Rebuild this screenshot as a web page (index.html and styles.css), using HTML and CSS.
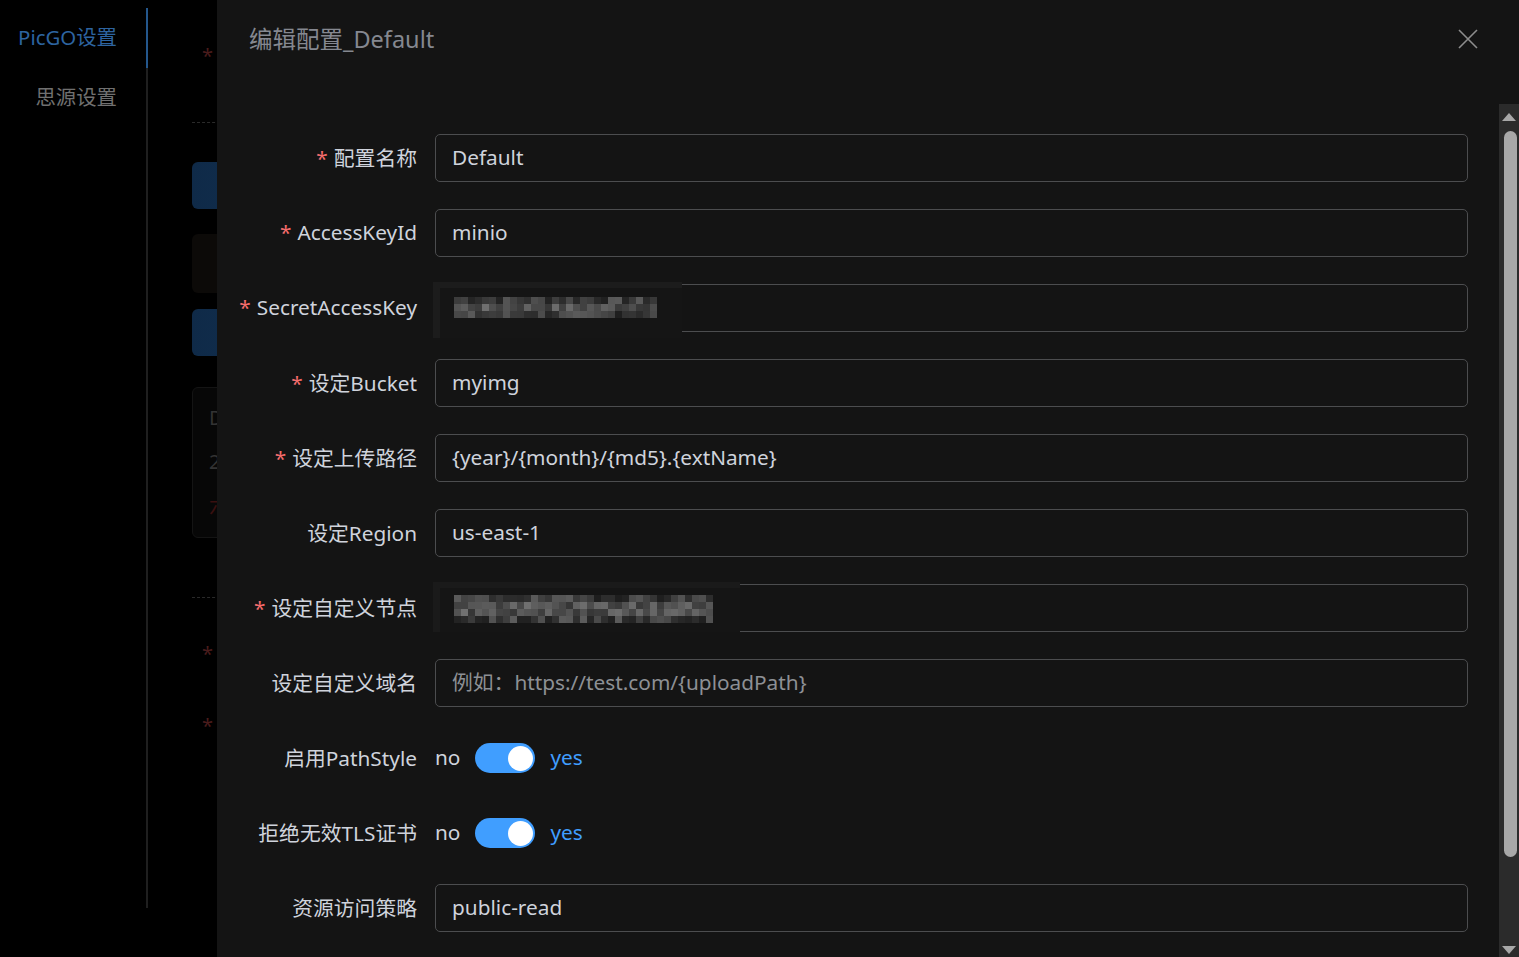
FILE: index.html
```html
<!DOCTYPE html>
<html lang="zh-CN">
<head>
    <meta charset="UTF-8">
    <meta name="viewport" content="width=device-width, initial-scale=1.0">
    <title>编辑配置_Default</title>
    <link rel="stylesheet" href="styles.css">
</head>
<body>

<div class="page">
    <aside class="side">
        <nav class="menu">
            <a class="menu-item active">PicGO设置</a>
            <a class="menu-item">思源设置</a>
        </nav>
    </aside>
    <main class="behind">
        <span class="b-star">*</span>
        <div class="b-dash"></div>
        <div class="b-btn"></div>
        <div class="b-box"></div>
        <div class="b-btn b-btn2"></div>
        <div class="b-card">
            <p>D</p>
            <p>2</p>
            <p class="b-red">六</p>
        </div>
        <div class="b-dash b-dash2"></div>
        <span class="b-star b-star2">*</span>
        <span class="b-star b-star3">*</span>
    </main>
</div>

<div class="drawer">
    <header class="drawer-head">
        <span class="drawer-title">编辑配置_Default</span>
        <button class="close" type="button" aria-label="关闭">
            <svg width="20" height="20" viewBox="0 0 20 20">
                <path d="M1 1 L19 19 M19 1 L1 19" stroke="#8d8d8d" stroke-width="1.6" fill="none"/>
            </svg>
        </button>
    </header>
    <div class="drawer-body">
        <form class="form">
            <div class="row">
                <label class="label req">配置名称</label>
                <div class="field"><input class="input" type="text" value="Default"></div>
            </div>
            <div class="row">
                <label class="label req">AccessKeyId</label>
                <div class="field"><input class="input" type="text" value="minio"></div>
            </div>
            <div class="row">
                <label class="label req">SecretAccessKey</label>
                <div class="field">
                    <input class="input" type="text" value="">
                    <div class="masked masked-key"><div class="mosaic" data-cols="29" data-rows="3" data-seed="7"></div></div>
                </div>
            </div>
            <div class="row">
                <label class="label req">设定Bucket</label>
                <div class="field"><input class="input" type="text" value="myimg"></div>
            </div>
            <div class="row">
                <label class="label req">设定上传路径</label>
                <div class="field"><input class="input" type="text" value="{year}/{month}/{md5}.{extName}"></div>
            </div>
            <div class="row">
                <label class="label">设定Region</label>
                <div class="field"><input class="input" type="text" value="us-east-1"></div>
            </div>
            <div class="row">
                <label class="label req">设定自定义节点</label>
                <div class="field">
                    <input class="input" type="text" value="">
                    <div class="masked masked-node"><div class="mosaic" data-cols="37" data-rows="4" data-seed="19"></div></div>
                </div>
            </div>
            <div class="row">
                <label class="label">设定自定义域名</label>
                <div class="field"><input class="input" type="text" placeholder="例如：https://test.com/{uploadPath}"></div>
            </div>
            <div class="row">
                <label class="label">启用PathStyle</label>
                <div class="field toggle">
                    <span class="toggle-off">no</span>
                    <span class="switch"><span class="knob"></span></span>
                    <span class="toggle-on">yes</span>
                </div>
            </div>
            <div class="row">
                <label class="label">拒绝无效TLS证书</label>
                <div class="field toggle">
                    <span class="toggle-off">no</span>
                    <span class="switch"><span class="knob"></span></span>
                    <span class="toggle-on">yes</span>
                </div>
            </div>
            <div class="row">
                <label class="label">资源访问策略</label>
                <div class="field"><input class="input" type="text" value="public-read"></div>
            </div>
        </form>
        <div class="scrollbar">
            <span class="arrow-up"></span>
            <span class="thumb"></span>
            <span class="arrow-down"></span>
        </div>
    </div>
</div>

<script>
    // fill the blurred blocks with grey squares
    document.querySelectorAll('.mosaic').forEach((box) => {
        const cols = Number(box.dataset.cols);
        const rows = Number(box.dataset.rows);
        let seed = Number(box.dataset.seed);
        box.style.gridTemplateColumns = `repeat(${cols}, 7px)`;
        for (let i = 0; i < cols * rows; i++) {
            seed = (seed * 9301 + 49297) % 233280;
            const r = seed / 233280;
            const row = Math.floor(i / cols);
            let g = 50 + Math.round(r * 62);
            if (row === 0 || row === rows - 1) g -= 20;
            const cell = document.createElement('span');
            cell.style.background = `rgb(${g}, ${g}, ${g})`;
            box.appendChild(cell);
        }
    });
</script>

</body>
</html>
```

FILE: styles.css
```css
* {
    box-sizing: border-box;
}
html, body {
    margin: 0;
    height: 100%;
    overflow: hidden;
}
body {
    background: #000;
    font-family: "Noto Sans", "Noto Sans CJK SC", sans-serif;
    color: #cfd3dc;
}
.page {
    display: flex;
    height: 100%;
}
.side {
    width: 148px;
    flex-shrink: 0;
    padding-top: 8px;
}
.menu {
    height: 900px;
    border-right: 2px solid #1f1f1f;
}
.menu-item {
    display: block;
    height: 60px;
    line-height: 58px;
    padding-right: 29px;
    margin-right: -2px;
    text-align: right;
    font-size: 20.4px;
    color: #707070;
    border-right: 2px solid transparent;
}
.menu-item.active {
    color: #2d64a0;
    border-right-color: #24578c;
}
.behind {
    flex: 1;
    padding-left: 44px;
    padding-top: 44px;
}
.b-star {
    display: block;
    margin-left: 10px;
    height: 24px;
    font-size: 20px;
    line-height: 24px;
    color: #4a1c1c;
}
.b-star2 {
    margin-top: 44px;
}
.b-star3 {
    margin-top: 48px;
}
.b-dash {
    margin-top: 54px;
    width: 400px;
    border-top: 1px dashed #2a2a2a;
}
.b-dash2 {
    margin-top: 59px;
}
.b-btn {
    margin-top: 39px;
    width: 300px;
    height: 47px;
    border-radius: 6px;
    background: linear-gradient(90deg, #0f2a48, #163a60);
}
.b-btn2 {
    margin-top: 16px;
}
.b-box {
    margin-top: 25px;
    width: 300px;
    height: 59px;
    border-radius: 6px;
    background: #0c0a08;
}
.b-card {
    margin-top: 31px;
    width: 400px;
    height: 151px;
    padding: 16px 16px;
    border: 1px solid #141414;
    border-radius: 6px;
    background: #070707;
    font-size: 20px;
    color: #333;
}
.b-card p {
    margin: 0 0 16px;
    line-height: 28px;
}
.b-card .b-red {
    color: #3a1010;
}

.drawer {
    position: fixed;
    top: 0;
    left: 217px;
    right: 0;
    bottom: 0;
    background: #141414;
    display: flex;
    flex-direction: column;
}
.drawer-head {
    height: 78px;
    padding: 0 32px;
    display: flex;
    align-items: center;
    justify-content: space-between;
    flex-shrink: 0;
}
.drawer-title {
    font-size: 23.5px;
    color: #858890;
    padding-bottom: 2px;
}
.close {
    background: none;
    border: none;
    padding: 0;
    margin-right: 9px;
    width: 20px;
    height: 20px;
    display: flex;
}
.drawer-body {
    flex: 1;
    margin-top: 26px;
    display: flex;
    overflow: hidden;
}
.form {
    flex: 1;
    padding: 30px 31px 0 19px;
}
.scrollbar {
    width: 20px;
    flex-shrink: 0;
    background: #2b2b2b;
    display: flex;
    flex-direction: column;
    align-items: center;
    padding-top: 9px;
}
.arrow-up,
.arrow-down {
    width: 0;
    height: 0;
    border-left: 7px solid transparent;
    border-right: 7px solid transparent;
}
.arrow-up {
    border-bottom: 8px solid #a8a8a8;
}
.arrow-down {
    margin-top: 89px;
    border-top: 8px solid #a8a8a8;
}
.thumb {
    margin-top: 10px;
    margin-left: 3px;
    width: 13px;
    height: 726px;
    border-radius: 7px;
    background: #a8a8a8;
}
.row {
    display: flex;
    align-items: center;
    height: 48px;
    margin-bottom: 27px;
}
.label {
    width: 199px;
    flex-shrink: 0;
    padding-right: 18px;
    padding-bottom: 3px;
    text-align: right;
    font-size: 20.8px;
    color: #cfd3dc;
    white-space: nowrap;
}
.label.req::before {
    content: "*";
    color: #f56c6c;
    margin-right: 6px;
}
.field {
    flex: 1;
    position: relative;
    height: 48px;
}
.input {
    width: 100%;
    height: 48px;
    padding: 0 16px 3px;
    background: #141414;
    border: 1px solid #4c4d4f;
    border-radius: 5px;
    color: #cfd3dc;
    font-family: inherit;
    font-size: 20.8px;
    outline: none;
}
.input::placeholder {
    color: #8d9095;
}
.masked {
    position: absolute;
    top: -2px;
    left: -2px;
    background: #151515;
    border-top: 6px solid #1c1c1c;
    border-left: 7px solid #1c1c1c;
}
.masked-key {
    width: 249px;
    height: 56px;
    padding: 9px 0 0 14px;
}
.masked-node {
    width: 307px;
    height: 50px;
    padding: 7px 0 0 14px;
    border-left-color: #1a1a1a;
    border-top-color: #1a1a1a;
}
.mosaic {
    display: grid;
    grid-auto-rows: 7px;
}
.toggle {
    display: flex;
    align-items: center;
    gap: 15px;
    font-size: 20.8px;
    padding-bottom: 2px;
}
.toggle-off {
    color: #cfd3dc;
}
.toggle-on {
    color: #409eff;
}
.switch {
    width: 60px;
    height: 30px;
    border-radius: 15px;
    background: #409eff;
    display: flex;
    justify-content: flex-end;
    align-items: center;
    padding: 0 2px;
    margin-top: 2px;
}
.knob {
    width: 25px;
    height: 25px;
    border-radius: 50%;
    background: #fff;
}
```
